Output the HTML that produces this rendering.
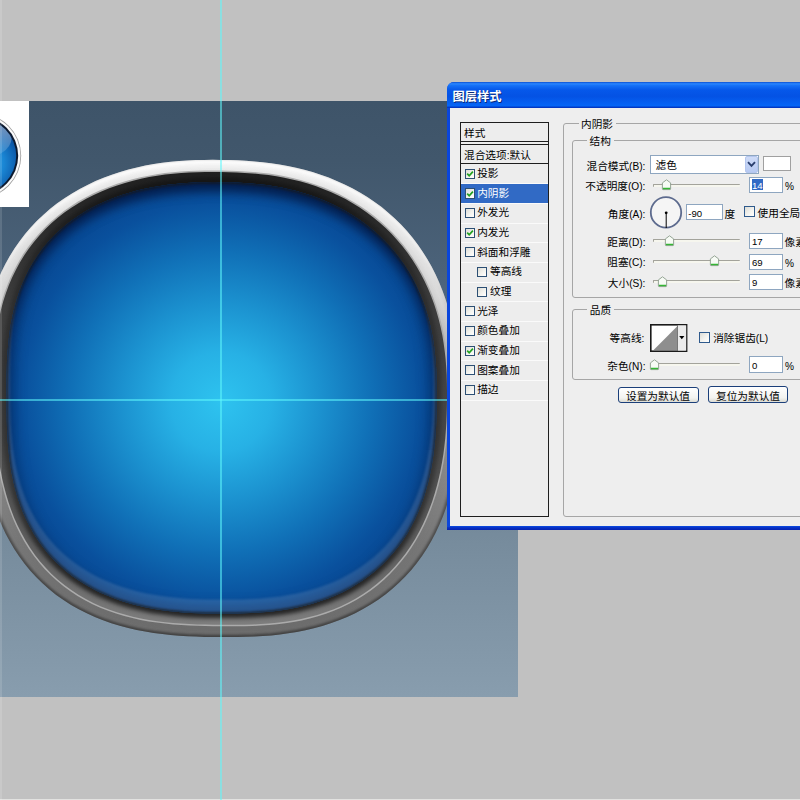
<!DOCTYPE html>
<html lang="zh"><head><meta charset="utf-8"><title>图层样式</title>
<style>
html,body{margin:0;padding:0}
html{overflow:hidden;width:800px;height:800px}
body{width:800px;height:800px;overflow:hidden;position:relative;background:#c1c1c1;font-family:"Liberation Sans","Noto Sans CJK SC",sans-serif;font-size:9.8px;color:#000}
.abs{position:absolute}
div{box-sizing:border-box}
.t{position:absolute;white-space:nowrap;height:14px;line-height:14px;color:#000;overflow:visible;font-family:"Liberation Sans","Noto Sans CJK SC",sans-serif;font-size:10.67px}
.t .l{font-size:10.15px}
.b{position:absolute}
.inp{position:absolute;background:#fff;border:1px solid #8ea6c0}
.cb{position:absolute;width:11.2px;height:11.2px;border:1px solid #2f5a8c;background:linear-gradient(135deg,#dcdcd6 0%,#f3f3ef 55%,#ffffff 100%)}
.cb.s{width:10.3px;height:10.1px;border-color:#2c4f74}
.sep{position:absolute;left:460.5px;width:87px;height:1px;background:#fafafa}
.trk{position:absolute;height:3px;background:#f6f6ee;border-top:1px solid #a3a39b;border-left:1px solid #a3a39b;border-radius:1px}
.grp{position:absolute;border:1px solid #a6a6a6;border-radius:3px}
.btn{position:absolute;border:1px solid #1b3f7a;border-radius:3px;background:linear-gradient(#ffffff,#f3f3f0 70%,#dcdcd4)}
</style></head><body>
<div class="b" style="left:0;top:101px;width:518px;height:596px;background:linear-gradient(#3e5469 0,#41576c 10%,#4b6279 28.4%,#5c7388 50%,#768b9c 72.8%,#889dae 100%)"></div>
<div class="b" style="left:0;top:101px;width:29px;height:106px;background:#fff;overflow:hidden">
<svg class="abs" style="left:0;top:0" width="29" height="106" viewBox="0 101 29 106">
<defs><radialGradient id="tb" cx="-14" cy="163" r="40" gradientUnits="userSpaceOnUse"><stop offset="0" stop-color="#2fb0f0"/><stop offset="0.45" stop-color="#1a86d4"/><stop offset="0.8" stop-color="#0c5aaa"/><stop offset="1" stop-color="#08428c"/></radialGradient>
<linearGradient id="tgl" x1="0" y1="120" x2="0" y2="158" gradientUnits="userSpaceOnUse"><stop offset="0" stop-color="#fff" stop-opacity="0.5"/><stop offset="1" stop-color="#fff" stop-opacity="0.08"/></linearGradient>
<clipPath id="tbc"><circle cx="-21.4" cy="155.8" r="37.6"/></clipPath></defs>
<circle cx="-21.4" cy="155.8" r="42.6" fill="#9a9a9a"/>
<circle cx="-21.4" cy="155.8" r="41.8" fill="#fbfbfb"/>
<circle cx="-21.4" cy="155.8" r="39.6" fill="#0c1a30"/>
<circle cx="-21.4" cy="155.8" r="37.6" fill="url(#tb)"/>
<g clip-path="url(#tbc)"><ellipse cx="-21.4" cy="138" rx="33" ry="21" fill="url(#tgl)"/></g>
</svg></div>
<svg class="abs" style="left:0;top:0" width="800" height="800" viewBox="0 0 800 800">
<defs>
<linearGradient id="rimg" x1="0" y1="160" x2="0" y2="637" gradientUnits="userSpaceOnUse">
<stop offset="0" stop-color="#f5f5f5"/><stop offset="0.12" stop-color="#ececec"/><stop offset="0.29" stop-color="#d9d9d9"/><stop offset="0.42" stop-color="#b6b6b6"/><stop offset="0.6" stop-color="#8e8e8e"/><stop offset="0.8" stop-color="#777777"/><stop offset="1" stop-color="#6c6c6c"/>
</linearGradient>
<linearGradient id="ringg" x1="0" y1="171" x2="0" y2="626" gradientUnits="userSpaceOnUse">
<stop offset="0" stop-color="#202020"/><stop offset="0.12" stop-color="#2c2c2c"/><stop offset="0.3" stop-color="#3e3e3e"/><stop offset="0.6" stop-color="#484848"/><stop offset="0.85" stop-color="#626262"/><stop offset="1" stop-color="#7e7e7e"/>
</linearGradient>
<linearGradient id="rimhi" x1="0" y1="160" x2="0" y2="637" gradientUnits="userSpaceOnUse">
<stop offset="0" stop-color="#fff" stop-opacity="0.95"/><stop offset="0.2" stop-color="#fff" stop-opacity="0.7"/><stop offset="0.38" stop-color="#fff" stop-opacity="0"/><stop offset="1" stop-color="#fff" stop-opacity="0"/>
</linearGradient>
<linearGradient id="rimlo" x1="0" y1="160" x2="0" y2="637" gradientUnits="userSpaceOnUse">
<stop offset="0" stop-color="#303030" stop-opacity="0.15"/><stop offset="0.4" stop-color="#303030" stop-opacity="0.2"/><stop offset="0.65" stop-color="#303030" stop-opacity="0.55"/><stop offset="1" stop-color="#303030" stop-opacity="0.7"/>
</linearGradient>
<linearGradient id="ringsh" x1="0" y1="171" x2="0" y2="626" gradientUnits="userSpaceOnUse">
<stop offset="0" stop-color="#0a0a0a" stop-opacity="0.55"/><stop offset="0.2" stop-color="#0a0a0a" stop-opacity="0.3"/><stop offset="0.65" stop-color="#0a0a0a" stop-opacity="0.35"/><stop offset="0.9" stop-color="#0a0a0a" stop-opacity="0.72"/><stop offset="1" stop-color="#0a0a0a" stop-opacity="0.78"/>
</linearGradient>
<radialGradient id="blueg" cx="221" cy="402" r="250" gradientUnits="userSpaceOnUse">
<stop offset="0" stop-color="#2ec3ef"/><stop offset="0.2" stop-color="#27b1e5"/><stop offset="0.4" stop-color="#1b91cf"/><stop offset="0.6" stop-color="#1070b7"/><stop offset="0.8" stop-color="#09509d"/><stop offset="1" stop-color="#063f88"/>
</radialGradient>
<linearGradient id="topsh" x1="0" y1="182" x2="0" y2="218" gradientUnits="userSpaceOnUse">
<stop offset="0" stop-color="#02122e" stop-opacity="0.95"/><stop offset="0.18" stop-color="#031a44" stop-opacity="0.7"/><stop offset="0.42" stop-color="#04245a" stop-opacity="0.32"/><stop offset="1" stop-color="#04245a" stop-opacity="0"/>
</linearGradient>
<clipPath id="bluec"><path d="M436.8 398.5L436.7 406.0L436.6 413.6L436.3 421.1L436.0 428.7L435.4 436.3L434.8 443.9L433.9 451.6L432.8 459.2L431.5 466.9L430.0 474.6L428.2 482.2L426.1 489.8L423.8 497.4L421.1 504.9L418.1 512.3L414.8 519.6L411.1 526.7L407.1 533.7L402.7 540.5L398.0 547.0L392.9 553.3L387.5 559.3L381.8 565.1L375.8 570.5L369.5 575.5L363.0 580.3L356.2 584.6L349.3 588.7L342.1 592.4L334.8 595.7L327.4 598.7L319.9 601.3L312.4 603.7L304.7 605.7L297.1 607.5L289.4 609.0L281.7 610.2L274.0 611.2L266.4 612.0L258.8 612.6L251.2 613.1L243.6 613.3L236.0 613.5L228.5 613.6L221.0 613.6L213.5 613.5L206.0 613.4L198.4 613.2L190.9 612.9L183.3 612.4L175.7 611.7L168.0 610.9L160.4 609.9L152.7 608.7L145.0 607.2L137.4 605.5L129.7 603.5L122.2 601.2L114.6 598.6L107.2 595.6L99.8 592.4L92.6 588.8L85.6 584.8L78.8 580.6L72.1 575.9L65.8 570.9L59.7 565.6L53.9 559.9L48.4 553.9L43.3 547.6L38.5 541.1L34.1 534.3L30.1 527.3L26.4 520.1L23.1 512.7L20.2 505.3L17.6 497.7L15.4 490.0L13.5 482.3L11.9 474.6L10.5 466.9L9.4 459.2L8.6 451.5L7.9 443.8L7.4 436.2L7.0 428.6L6.8 421.0L6.7 413.5L6.6 406.0L6.6 398.5L6.5 391.0L6.5 383.5L6.6 376.0L6.8 368.4L7.0 360.8L7.5 353.1L8.1 345.4L8.9 337.7L9.9 329.9L11.2 322.1L12.8 314.4L14.7 306.6L16.9 298.9L19.4 291.3L22.4 283.8L25.7 276.4L29.3 269.2L33.4 262.2L37.8 255.4L42.6 248.8L47.8 242.6L53.3 236.6L59.1 230.9L65.3 225.5L71.7 220.5L78.3 215.9L85.2 211.6L92.2 207.6L99.4 204.0L106.8 200.7L114.2 197.7L121.8 195.0L129.4 192.7L137.0 190.6L144.7 188.7L152.3 187.2L160.0 185.9L167.7 184.8L175.4 183.9L183.0 183.2L190.7 182.7L198.3 182.3L205.9 182.2L213.4 182.1L221.0 182.2L228.6 182.3L236.1 182.5L243.7 182.9L251.2 183.4L258.8 184.2L266.4 185.1L273.9 186.3L281.5 187.6L289.0 189.2L296.5 191.1L303.9 193.2L311.3 195.6L318.6 198.3L325.9 201.3L333.0 204.5L340.0 208.0L346.9 211.8L353.7 215.9L360.2 220.3L366.6 225.0L372.8 229.9L378.7 235.2L384.4 240.7L389.9 246.4L395.0 252.5L399.9 258.7L404.5 265.2L408.8 271.9L412.7 278.7L416.3 285.7L419.6 292.9L422.6 300.2L425.2 307.6L427.5 315.1L429.6 322.6L431.3 330.2L432.8 337.8L434.0 345.4L434.9 353.0L435.6 360.7L436.2 368.3L436.5 375.8L436.7 383.4L436.8 391.0Z"/></clipPath>
<clipPath id="ringc"><path d="M447.0 398.5L446.9 406.4L446.7 414.3L446.4 422.2L445.9 430.1L445.3 438.0L444.4 446.0L443.4 453.9L442.1 461.9L440.6 469.9L438.9 477.8L436.9 485.7L434.7 493.6L432.2 501.5L429.3 509.3L426.2 517.0L422.8 524.6L419.0 532.0L414.9 539.4L410.4 546.5L405.6 553.4L400.5 560.1L395.0 566.6L389.2 572.7L383.1 578.6L376.7 584.1L370.0 589.2L363.1 594.0L355.9 598.4L348.5 602.5L340.9 606.2L333.2 609.4L325.3 612.3L317.3 614.9L309.3 617.1L301.2 619.0L293.1 620.5L285.0 621.8L276.9 622.8L268.8 623.6L260.8 624.1L252.8 624.5L244.8 624.7L236.8 624.8L228.9 624.8L221.0 624.8L213.1 624.7L205.2 624.6L197.3 624.4L189.3 624.0L181.3 623.6L173.3 623.0L165.2 622.2L157.1 621.2L149.0 620.0L140.9 618.5L132.8 616.7L124.8 614.6L116.8 612.2L108.8 609.5L101.0 606.4L93.3 602.9L85.8 599.0L78.4 594.8L71.3 590.1L64.4 585.1L57.9 579.7L51.6 573.9L45.7 567.8L40.1 561.4L34.8 554.7L30.0 547.7L25.5 540.5L21.4 533.1L17.6 525.6L14.2 517.9L11.2 510.1L8.5 502.2L6.1 494.2L4.0 486.2L2.1 478.2L0.5 470.1L-0.8 462.1L-2.0 454.1L-2.9 446.1L-3.7 438.1L-4.3 430.2L-4.9 422.2L-5.3 414.3L-5.6 406.4L-5.8 398.5L-6.0 390.6L-6.2 382.6L-6.2 374.6L-6.1 366.6L-5.8 358.5L-5.3 350.4L-4.6 342.3L-3.6 334.1L-2.4 325.9L-0.8 317.8L1.0 309.6L3.2 301.5L5.8 293.5L8.7 285.6L12.0 277.8L15.7 270.2L19.7 262.7L24.1 255.5L28.9 248.4L34.1 241.7L39.6 235.2L45.4 229.0L51.6 223.1L58.0 217.5L64.7 212.3L71.7 207.4L78.9 202.9L86.2 198.7L93.7 194.9L101.4 191.4L109.2 188.2L117.1 185.4L125.0 182.9L133.0 180.7L141.0 178.8L149.1 177.1L157.1 175.7L165.2 174.6L173.2 173.7L181.2 173.0L189.2 172.5L197.2 172.2L205.2 172.0L213.1 172.0L221.0 172.1L228.9 172.2L236.8 172.5L244.7 172.9L252.6 173.4L260.6 174.2L268.5 175.1L276.4 176.3L284.3 177.7L292.2 179.4L300.0 181.3L307.8 183.6L315.6 186.1L323.2 188.9L330.8 192.0L338.3 195.4L345.6 199.1L352.7 203.2L359.7 207.6L366.5 212.2L373.1 217.2L379.5 222.4L385.7 228.0L391.5 233.8L397.1 239.9L402.5 246.2L407.5 252.8L412.2 259.6L416.6 266.5L420.7 273.7L424.5 281.0L428.0 288.4L431.1 296.0L434.0 303.7L436.5 311.4L438.7 319.3L440.6 327.1L442.3 335.1L443.6 343.0L444.7 350.9L445.6 358.9L446.2 366.8L446.7 374.8L446.9 382.7L447.0 390.6Z"/></clipPath>
<clipPath id="rimc"><path d="M459.5 398.5L459.6 406.8L459.6 415.2L459.5 423.6L459.2 432.0L458.7 440.4L458.0 448.9L457.1 457.4L456.0 465.9L454.6 474.4L452.9 482.9L450.9 491.4L448.6 499.8L445.9 508.2L442.9 516.5L439.5 524.6L435.7 532.7L431.6 540.6L427.1 548.2L422.2 555.7L416.9 562.9L411.3 569.9L405.3 576.5L399.0 582.8L392.4 588.8L385.4 594.4L378.2 599.7L370.7 604.6L363.0 609.1L355.2 613.2L347.1 616.9L338.9 620.3L330.6 623.3L322.3 626.0L313.8 628.3L305.4 630.3L296.8 631.9L288.3 633.3L279.8 634.5L271.3 635.4L262.9 636.0L254.5 636.5L246.0 636.8L237.7 637.0L229.3 637.1L221.0 637.0L212.7 637.0L204.3 636.9L196.0 636.6L187.6 636.3L179.2 635.7L170.7 635.0L162.3 634.1L153.8 633.0L145.3 631.6L136.8 630.0L128.3 628.0L119.8 625.8L111.4 623.2L103.1 620.3L94.9 617.0L86.8 613.3L78.8 609.3L71.1 604.9L63.5 600.0L56.2 594.9L49.2 589.3L42.5 583.3L36.1 577.0L30.1 570.4L24.4 563.5L19.1 556.3L14.1 548.8L9.6 541.1L5.4 533.2L1.6 525.1L-1.8 516.9L-4.8 508.6L-7.5 500.2L-9.9 491.8L-11.9 483.3L-13.7 474.7L-15.1 466.2L-16.4 457.7L-17.4 449.2L-18.2 440.7L-18.8 432.2L-19.2 423.7L-19.5 415.3L-19.7 406.9L-19.8 398.5L-19.9 390.1L-19.9 381.7L-19.7 373.2L-19.4 364.7L-18.9 356.2L-18.2 347.7L-17.3 339.1L-16.1 330.5L-14.5 322.0L-12.7 313.4L-10.6 304.9L-8.1 296.5L-5.3 288.1L-2.1 279.9L1.5 271.8L5.5 263.8L9.8 256.1L14.5 248.5L19.6 241.2L25.1 234.1L30.9 227.3L37.0 220.8L43.5 214.7L50.2 208.8L57.2 203.3L64.5 198.2L72.0 193.4L79.7 189.0L87.5 184.9L95.5 181.1L103.6 177.7L111.8 174.7L120.1 171.9L128.5 169.5L136.9 167.4L145.3 165.6L153.8 164.1L162.2 162.8L170.7 161.8L179.1 161.0L187.5 160.4L195.9 160.1L204.3 159.9L212.7 159.8L221.0 159.9L229.3 160.1L237.7 160.3L246.0 160.8L254.3 161.4L262.7 162.2L271.0 163.2L279.4 164.5L287.7 166.0L296.0 167.7L304.3 169.8L312.5 172.1L320.6 174.7L328.7 177.6L336.7 180.9L344.6 184.4L352.3 188.3L359.9 192.5L367.3 197.1L374.6 201.9L381.6 207.1L388.3 212.7L394.8 218.5L401.0 224.6L407.0 231.1L412.6 237.7L417.9 244.7L422.8 251.9L427.4 259.3L431.7 266.8L435.6 274.6L439.2 282.5L442.4 290.5L445.3 298.6L447.9 306.8L450.2 315.1L452.2 323.4L453.8 331.7L455.3 340.1L456.4 348.5L457.4 356.8L458.1 365.2L458.7 373.5L459.0 381.9L459.3 390.2Z"/></clipPath>
<mask id="topm" maskUnits="userSpaceOnUse" x="0" y="150" width="470" height="500"><rect x="0" y="150" width="470" height="500" fill="#fff"/><path d="M438.8 408.5L438.7 416.1L438.6 423.7L438.3 431.3L437.9 439.0L437.4 446.7L436.7 454.4L435.8 462.1L434.7 469.8L433.4 477.5L431.9 485.3L430.1 493.0L428.0 500.7L425.6 508.3L422.9 515.8L419.9 523.3L416.5 530.7L412.8 537.9L408.7 544.9L404.3 551.7L399.5 558.3L394.4 564.7L389.0 570.7L383.2 576.5L377.2 581.9L370.8 587.1L364.2 591.8L357.4 596.3L350.4 600.3L343.2 604.0L335.8 607.4L328.4 610.4L320.8 613.1L313.2 615.5L305.5 617.6L297.7 619.4L290.0 620.9L282.3 622.1L274.5 623.2L266.8 624.0L259.1 624.6L251.4 625.0L243.8 625.3L236.2 625.5L228.6 625.6L221.0 625.6L213.4 625.5L205.8 625.4L198.2 625.2L190.6 624.8L182.9 624.4L175.3 623.7L167.6 622.9L159.8 621.8L152.1 620.6L144.4 619.1L136.6 617.3L128.9 615.3L121.3 613.0L113.7 610.3L106.2 607.4L98.8 604.1L91.5 600.5L84.4 596.5L77.5 592.1L70.9 587.4L64.4 582.4L58.3 577.0L52.4 571.3L46.9 565.2L41.7 558.9L36.9 552.3L32.5 545.5L28.4 538.4L24.7 531.2L21.4 523.7L18.4 516.2L15.8 508.6L13.6 500.9L11.6 493.1L10.0 485.3L8.6 477.5L7.5 469.7L6.6 462.0L5.9 454.2L5.4 446.5L5.1 438.8L4.8 431.2L4.7 423.6L4.6 416.1L4.6 408.5L4.5 400.9L4.5 393.4L4.6 385.8L4.8 378.1L5.1 370.4L5.5 362.7L6.1 354.9L6.9 347.1L8.0 339.3L9.3 331.5L10.9 323.6L12.8 315.8L15.1 308.1L17.7 300.4L20.6 292.8L24.0 285.4L27.7 278.1L31.8 271.0L36.3 264.2L41.1 257.6L46.3 251.2L51.9 245.2L57.8 239.5L63.9 234.1L70.4 229.0L77.1 224.3L84.0 219.9L91.1 215.9L98.4 212.3L105.8 208.9L113.3 205.9L120.9 203.2L128.5 200.8L136.2 198.7L144.0 196.9L151.7 195.3L159.5 193.9L167.2 192.8L175.0 191.9L182.7 191.2L190.4 190.7L198.1 190.4L205.7 190.2L213.4 190.1L221.0 190.2L228.6 190.3L236.2 190.5L243.9 190.9L251.5 191.5L259.1 192.2L266.8 193.2L274.4 194.3L282.0 195.7L289.6 197.3L297.2 199.2L304.7 201.4L312.1 203.8L319.5 206.5L326.8 209.5L334.0 212.8L341.1 216.3L348.0 220.2L354.8 224.3L361.5 228.7L367.9 233.4L374.1 238.4L380.1 243.7L385.9 249.3L391.4 255.1L396.6 261.2L401.5 267.5L406.1 274.0L410.4 280.7L414.4 287.7L418.0 294.7L421.4 302.0L424.4 309.3L427.0 316.8L429.4 324.3L431.4 331.9L433.2 339.6L434.7 347.2L435.9 354.9L436.9 362.6L437.6 370.3L438.1 378.0L438.5 385.6L438.7 393.3L438.8 400.9Z" fill="#000" filter="url(#bl7)"/></mask>
<mask id="cres" maskUnits="userSpaceOnUse" x="0" y="150" width="470" height="500"><rect x="0" y="150" width="470" height="500" fill="#fff"/><path d="M433.3 388.0L433.2 395.4L433.1 402.8L432.8 410.3L432.5 417.7L432.0 425.2L431.3 432.7L430.5 440.2L429.5 447.8L428.2 455.3L426.7 462.9L425.0 470.4L423.0 477.9L420.6 485.4L418.0 492.8L415.1 500.1L411.8 507.2L408.2 514.3L404.3 521.1L400.0 527.8L395.3 534.3L390.3 540.5L385.0 546.4L379.4 552.0L373.5 557.4L367.3 562.3L360.9 567.0L354.2 571.3L347.3 575.3L340.3 578.9L333.1 582.2L325.8 585.1L318.4 587.7L310.9 590.0L303.4 592.0L295.9 593.7L288.3 595.1L280.7 596.4L273.2 597.3L265.7 598.1L258.1 598.7L250.7 599.1L243.2 599.4L235.8 599.5L228.4 599.6L221.0 599.6L213.6 599.5L206.2 599.4L198.8 599.2L191.4 598.9L183.9 598.4L176.4 597.8L168.9 597.0L161.3 596.1L153.8 594.8L146.2 593.4L138.7 591.7L131.2 589.8L123.7 587.5L116.3 585.0L108.9 582.1L101.7 578.9L94.6 575.4L87.7 571.5L80.9 567.3L74.4 562.7L68.1 557.8L62.1 552.5L56.4 547.0L51.0 541.1L46.0 534.9L41.3 528.4L36.9 521.7L33.0 514.8L29.4 507.7L26.1 500.5L23.3 493.1L20.8 485.7L18.6 478.1L16.7 470.5L15.1 462.9L13.8 455.3L12.8 447.7L12.0 440.1L11.3 432.6L10.8 425.1L10.5 417.6L10.3 410.1L10.2 402.7L10.1 395.4L10.1 388.0L10.0 380.6L10.0 373.2L10.1 365.8L10.2 358.4L10.5 350.9L10.9 343.3L11.5 335.8L12.2 328.1L13.2 320.5L14.5 312.8L16.0 305.2L17.9 297.6L20.0 290.0L22.5 282.5L25.4 275.1L28.6 267.8L32.2 260.7L36.2 253.8L40.6 247.0L45.3 240.6L50.4 234.4L55.8 228.5L61.6 222.9L67.6 217.6L73.9 212.7L80.5 208.1L87.2 203.9L94.2 200.0L101.3 196.4L108.5 193.2L115.9 190.3L123.3 187.7L130.8 185.4L138.3 183.3L145.9 181.5L153.4 180.0L161.0 178.7L168.6 177.7L176.1 176.8L183.6 176.1L191.2 175.6L198.6 175.3L206.1 175.2L213.6 175.1L221.0 175.2L228.4 175.3L235.9 175.5L243.3 175.9L250.7 176.4L258.2 177.1L265.6 178.0L273.1 179.2L280.5 180.5L287.9 182.1L295.3 183.9L302.6 186.0L309.9 188.3L317.1 191.0L324.2 193.8L331.3 197.0L338.2 200.5L345.0 204.2L351.6 208.2L358.1 212.6L364.4 217.1L370.4 222.0L376.3 227.2L381.9 232.6L387.3 238.3L392.4 244.2L397.2 250.4L401.7 256.7L405.8 263.3L409.7 270.1L413.3 277.0L416.5 284.0L419.4 291.2L422.0 298.5L424.3 305.9L426.3 313.3L428.0 320.8L429.4 328.2L430.6 335.8L431.5 343.3L432.2 350.8L432.7 358.2L433.0 365.7L433.2 373.2L433.3 380.6Z" fill="#000" filter="url(#bl1)"/></mask>
<filter id="bl6" color-interpolation-filters="sRGB" x="-10%" y="-10%" width="120%" height="120%"><feGaussianBlur stdDeviation="6"/></filter>
<filter id="bl7" color-interpolation-filters="sRGB" x="-10%" y="-10%" width="120%" height="120%"><feGaussianBlur stdDeviation="6"/></filter>
<filter id="bl2" color-interpolation-filters="sRGB" x="-10%" y="-10%" width="120%" height="120%"><feGaussianBlur stdDeviation="2.2"/></filter>
<filter id="bl1" color-interpolation-filters="sRGB" x="-10%" y="-10%" width="120%" height="120%"><feGaussianBlur stdDeviation="1.1"/></filter>
</defs>
<path d="M459.5 398.5L459.6 406.8L459.6 415.2L459.5 423.6L459.2 432.0L458.7 440.4L458.0 448.9L457.1 457.4L456.0 465.9L454.6 474.4L452.9 482.9L450.9 491.4L448.6 499.8L445.9 508.2L442.9 516.5L439.5 524.6L435.7 532.7L431.6 540.6L427.1 548.2L422.2 555.7L416.9 562.9L411.3 569.9L405.3 576.5L399.0 582.8L392.4 588.8L385.4 594.4L378.2 599.7L370.7 604.6L363.0 609.1L355.2 613.2L347.1 616.9L338.9 620.3L330.6 623.3L322.3 626.0L313.8 628.3L305.4 630.3L296.8 631.9L288.3 633.3L279.8 634.5L271.3 635.4L262.9 636.0L254.5 636.5L246.0 636.8L237.7 637.0L229.3 637.1L221.0 637.0L212.7 637.0L204.3 636.9L196.0 636.6L187.6 636.3L179.2 635.7L170.7 635.0L162.3 634.1L153.8 633.0L145.3 631.6L136.8 630.0L128.3 628.0L119.8 625.8L111.4 623.2L103.1 620.3L94.9 617.0L86.8 613.3L78.8 609.3L71.1 604.9L63.5 600.0L56.2 594.9L49.2 589.3L42.5 583.3L36.1 577.0L30.1 570.4L24.4 563.5L19.1 556.3L14.1 548.8L9.6 541.1L5.4 533.2L1.6 525.1L-1.8 516.9L-4.8 508.6L-7.5 500.2L-9.9 491.8L-11.9 483.3L-13.7 474.7L-15.1 466.2L-16.4 457.7L-17.4 449.2L-18.2 440.7L-18.8 432.2L-19.2 423.7L-19.5 415.3L-19.7 406.9L-19.8 398.5L-19.9 390.1L-19.9 381.7L-19.7 373.2L-19.4 364.7L-18.9 356.2L-18.2 347.7L-17.3 339.1L-16.1 330.5L-14.5 322.0L-12.7 313.4L-10.6 304.9L-8.1 296.5L-5.3 288.1L-2.1 279.9L1.5 271.8L5.5 263.8L9.8 256.1L14.5 248.5L19.6 241.2L25.1 234.1L30.9 227.3L37.0 220.8L43.5 214.7L50.2 208.8L57.2 203.3L64.5 198.2L72.0 193.4L79.7 189.0L87.5 184.9L95.5 181.1L103.6 177.7L111.8 174.7L120.1 171.9L128.5 169.5L136.9 167.4L145.3 165.6L153.8 164.1L162.2 162.8L170.7 161.8L179.1 161.0L187.5 160.4L195.9 160.1L204.3 159.9L212.7 159.8L221.0 159.9L229.3 160.1L237.7 160.3L246.0 160.8L254.3 161.4L262.7 162.2L271.0 163.2L279.4 164.5L287.7 166.0L296.0 167.7L304.3 169.8L312.5 172.1L320.6 174.7L328.7 177.6L336.7 180.9L344.6 184.4L352.3 188.3L359.9 192.5L367.3 197.1L374.6 201.9L381.6 207.1L388.3 212.7L394.8 218.5L401.0 224.6L407.0 231.1L412.6 237.7L417.9 244.7L422.8 251.9L427.4 259.3L431.7 266.8L435.6 274.6L439.2 282.5L442.4 290.5L445.3 298.6L447.9 306.8L450.2 315.1L452.2 323.4L453.8 331.7L455.3 340.1L456.4 348.5L457.4 356.8L458.1 365.2L458.7 373.5L459.0 381.9L459.3 390.2Z" fill="url(#rimg)"/>
<g clip-path="url(#rimc)">
<path d="M459.5 398.5L459.6 406.8L459.6 415.2L459.5 423.6L459.2 432.0L458.7 440.4L458.0 448.9L457.1 457.4L456.0 465.9L454.6 474.4L452.9 482.9L450.9 491.4L448.6 499.8L445.9 508.2L442.9 516.5L439.5 524.6L435.7 532.7L431.6 540.6L427.1 548.2L422.2 555.7L416.9 562.9L411.3 569.9L405.3 576.5L399.0 582.8L392.4 588.8L385.4 594.4L378.2 599.7L370.7 604.6L363.0 609.1L355.2 613.2L347.1 616.9L338.9 620.3L330.6 623.3L322.3 626.0L313.8 628.3L305.4 630.3L296.8 631.9L288.3 633.3L279.8 634.5L271.3 635.4L262.9 636.0L254.5 636.5L246.0 636.8L237.7 637.0L229.3 637.1L221.0 637.0L212.7 637.0L204.3 636.9L196.0 636.6L187.6 636.3L179.2 635.7L170.7 635.0L162.3 634.1L153.8 633.0L145.3 631.6L136.8 630.0L128.3 628.0L119.8 625.8L111.4 623.2L103.1 620.3L94.9 617.0L86.8 613.3L78.8 609.3L71.1 604.9L63.5 600.0L56.2 594.9L49.2 589.3L42.5 583.3L36.1 577.0L30.1 570.4L24.4 563.5L19.1 556.3L14.1 548.8L9.6 541.1L5.4 533.2L1.6 525.1L-1.8 516.9L-4.8 508.6L-7.5 500.2L-9.9 491.8L-11.9 483.3L-13.7 474.7L-15.1 466.2L-16.4 457.7L-17.4 449.2L-18.2 440.7L-18.8 432.2L-19.2 423.7L-19.5 415.3L-19.7 406.9L-19.8 398.5L-19.9 390.1L-19.9 381.7L-19.7 373.2L-19.4 364.7L-18.9 356.2L-18.2 347.7L-17.3 339.1L-16.1 330.5L-14.5 322.0L-12.7 313.4L-10.6 304.9L-8.1 296.5L-5.3 288.1L-2.1 279.9L1.5 271.8L5.5 263.8L9.8 256.1L14.5 248.5L19.6 241.2L25.1 234.1L30.9 227.3L37.0 220.8L43.5 214.7L50.2 208.8L57.2 203.3L64.5 198.2L72.0 193.4L79.7 189.0L87.5 184.9L95.5 181.1L103.6 177.7L111.8 174.7L120.1 171.9L128.5 169.5L136.9 167.4L145.3 165.6L153.8 164.1L162.2 162.8L170.7 161.8L179.1 161.0L187.5 160.4L195.9 160.1L204.3 159.9L212.7 159.8L221.0 159.9L229.3 160.1L237.7 160.3L246.0 160.8L254.3 161.4L262.7 162.2L271.0 163.2L279.4 164.5L287.7 166.0L296.0 167.7L304.3 169.8L312.5 172.1L320.6 174.7L328.7 177.6L336.7 180.9L344.6 184.4L352.3 188.3L359.9 192.5L367.3 197.1L374.6 201.9L381.6 207.1L388.3 212.7L394.8 218.5L401.0 224.6L407.0 231.1L412.6 237.7L417.9 244.7L422.8 251.9L427.4 259.3L431.7 266.8L435.6 274.6L439.2 282.5L442.4 290.5L445.3 298.6L447.9 306.8L450.2 315.1L452.2 323.4L453.8 331.7L455.3 340.1L456.4 348.5L457.4 356.8L458.1 365.2L458.7 373.5L459.0 381.9L459.3 390.2Z" fill="none" stroke="url(#rimlo)" stroke-width="4.5" filter="url(#bl1)"/>
<path d="M459.5 400.7L459.6 409.0L459.6 417.4L459.5 425.8L459.2 434.2L458.7 442.6L458.0 451.1L457.1 459.6L456.0 468.1L454.6 476.6L452.9 485.1L450.9 493.6L448.6 502.0L445.9 510.4L442.9 518.7L439.5 526.8L435.7 534.9L431.6 542.8L427.1 550.4L422.2 557.9L416.9 565.1L411.3 572.1L405.3 578.7L399.0 585.0L392.4 591.0L385.4 596.6L378.2 601.9L370.7 606.8L363.0 611.3L355.2 615.4L347.1 619.1L338.9 622.5L330.6 625.5L322.3 628.2L313.8 630.5L305.4 632.5L296.8 634.1L288.3 635.5L279.8 636.7L271.3 637.6L262.9 638.2L254.5 638.7L246.0 639.0L237.7 639.2L229.3 639.3L221.0 639.2L212.7 639.2L204.3 639.1L196.0 638.8L187.6 638.5L179.2 637.9L170.7 637.2L162.3 636.3L153.8 635.2L145.3 633.8L136.8 632.2L128.3 630.2L119.8 628.0L111.4 625.4L103.1 622.5L94.9 619.2L86.8 615.5L78.8 611.5L71.1 607.1L63.5 602.2L56.2 597.1L49.2 591.5L42.5 585.5L36.1 579.2L30.1 572.6L24.4 565.7L19.1 558.5L14.1 551.0L9.6 543.3L5.4 535.4L1.6 527.3L-1.8 519.1L-4.8 510.8L-7.5 502.4L-9.9 494.0L-11.9 485.5L-13.7 476.9L-15.1 468.4L-16.4 459.9L-17.4 451.4L-18.2 442.9L-18.8 434.4L-19.2 425.9L-19.5 417.5L-19.7 409.1L-19.8 400.7L-19.9 392.3L-19.9 383.9L-19.7 375.4L-19.4 366.9L-18.9 358.4L-18.2 349.9L-17.3 341.3L-16.1 332.7L-14.5 324.2L-12.7 315.6L-10.6 307.1L-8.1 298.7L-5.3 290.3L-2.1 282.1L1.5 274.0L5.5 266.0L9.8 258.3L14.5 250.7L19.6 243.4L25.1 236.3L30.9 229.5L37.0 223.0L43.5 216.9L50.2 211.0L57.2 205.5L64.5 200.4L72.0 195.6L79.7 191.2L87.5 187.1L95.5 183.3L103.6 179.9L111.8 176.9L120.1 174.1L128.5 171.7L136.9 169.6L145.3 167.8L153.8 166.3L162.2 165.0L170.7 164.0L179.1 163.2L187.5 162.6L195.9 162.3L204.3 162.1L212.7 162.0L221.0 162.1L229.3 162.3L237.7 162.5L246.0 163.0L254.3 163.6L262.7 164.4L271.0 165.4L279.4 166.7L287.7 168.2L296.0 169.9L304.3 172.0L312.5 174.3L320.6 176.9L328.7 179.8L336.7 183.1L344.6 186.6L352.3 190.5L359.9 194.7L367.3 199.3L374.6 204.1L381.6 209.3L388.3 214.9L394.8 220.7L401.0 226.8L407.0 233.3L412.6 239.9L417.9 246.9L422.8 254.1L427.4 261.5L431.7 269.0L435.6 276.8L439.2 284.7L442.4 292.7L445.3 300.8L447.9 309.0L450.2 317.3L452.2 325.6L453.8 333.9L455.3 342.3L456.4 350.7L457.4 359.0L458.1 367.4L458.7 375.7L459.0 384.1L459.3 392.4Z" fill="none" stroke="url(#rimhi)" stroke-width="3.5" filter="url(#bl1)"/>
<path d="M447.0 398.5L446.9 406.4L446.7 414.3L446.4 422.2L445.9 430.1L445.3 438.0L444.4 446.0L443.4 453.9L442.1 461.9L440.6 469.9L438.9 477.8L436.9 485.7L434.7 493.6L432.2 501.5L429.3 509.3L426.2 517.0L422.8 524.6L419.0 532.0L414.9 539.4L410.4 546.5L405.6 553.4L400.5 560.1L395.0 566.6L389.2 572.7L383.1 578.6L376.7 584.1L370.0 589.2L363.1 594.0L355.9 598.4L348.5 602.5L340.9 606.2L333.2 609.4L325.3 612.3L317.3 614.9L309.3 617.1L301.2 619.0L293.1 620.5L285.0 621.8L276.9 622.8L268.8 623.6L260.8 624.1L252.8 624.5L244.8 624.7L236.8 624.8L228.9 624.8L221.0 624.8L213.1 624.7L205.2 624.6L197.3 624.4L189.3 624.0L181.3 623.6L173.3 623.0L165.2 622.2L157.1 621.2L149.0 620.0L140.9 618.5L132.8 616.7L124.8 614.6L116.8 612.2L108.8 609.5L101.0 606.4L93.3 602.9L85.8 599.0L78.4 594.8L71.3 590.1L64.4 585.1L57.9 579.7L51.6 573.9L45.7 567.8L40.1 561.4L34.8 554.7L30.0 547.7L25.5 540.5L21.4 533.1L17.6 525.6L14.2 517.9L11.2 510.1L8.5 502.2L6.1 494.2L4.0 486.2L2.1 478.2L0.5 470.1L-0.8 462.1L-2.0 454.1L-2.9 446.1L-3.7 438.1L-4.3 430.2L-4.9 422.2L-5.3 414.3L-5.6 406.4L-5.8 398.5L-6.0 390.6L-6.2 382.6L-6.2 374.6L-6.1 366.6L-5.8 358.5L-5.3 350.4L-4.6 342.3L-3.6 334.1L-2.4 325.9L-0.8 317.8L1.0 309.6L3.2 301.5L5.8 293.5L8.7 285.6L12.0 277.8L15.7 270.2L19.7 262.7L24.1 255.5L28.9 248.4L34.1 241.7L39.6 235.2L45.4 229.0L51.6 223.1L58.0 217.5L64.7 212.3L71.7 207.4L78.9 202.9L86.2 198.7L93.7 194.9L101.4 191.4L109.2 188.2L117.1 185.4L125.0 182.9L133.0 180.7L141.0 178.8L149.1 177.1L157.1 175.7L165.2 174.6L173.2 173.7L181.2 173.0L189.2 172.5L197.2 172.2L205.2 172.0L213.1 172.0L221.0 172.1L228.9 172.2L236.8 172.5L244.7 172.9L252.6 173.4L260.6 174.2L268.5 175.1L276.4 176.3L284.3 177.7L292.2 179.4L300.0 181.3L307.8 183.6L315.6 186.1L323.2 188.9L330.8 192.0L338.3 195.4L345.6 199.1L352.7 203.2L359.7 207.6L366.5 212.2L373.1 217.2L379.5 222.4L385.7 228.0L391.5 233.8L397.1 239.9L402.5 246.2L407.5 252.8L412.2 259.6L416.6 266.5L420.7 273.7L424.5 281.0L428.0 288.4L431.1 296.0L434.0 303.7L436.5 311.4L438.7 319.3L440.6 327.1L442.3 335.1L443.6 343.0L444.7 350.9L445.6 358.9L446.2 366.8L446.7 374.8L446.9 382.7L447.0 390.6Z" fill="none" stroke="#666" stroke-opacity="0.09" stroke-width="8" filter="url(#bl2)"/>
</g>
<path d="M448.5 398.5L448.4 406.4L448.2 414.4L447.9 422.3L447.4 430.3L446.8 438.3L445.9 446.3L444.8 454.3L443.6 462.3L442.1 470.3L440.3 478.3L438.3 486.3L436.1 494.3L433.5 502.1L430.7 510.0L427.5 517.7L424.0 525.4L420.2 532.9L416.1 540.2L411.6 547.4L406.8 554.4L401.6 561.1L396.1 567.6L390.3 573.8L384.1 579.7L377.7 585.2L370.9 590.4L363.9 595.2L356.7 599.7L349.3 603.8L341.6 607.5L333.9 610.8L326.0 613.7L318.0 616.3L309.9 618.5L301.8 620.4L293.6 622.0L285.4 623.2L277.3 624.3L269.2 625.0L261.0 625.6L253.0 626.0L244.9 626.2L236.9 626.3L229.0 626.3L221.0 626.3L213.0 626.2L205.1 626.1L197.1 625.8L189.1 625.5L181.0 625.1L173.0 624.4L164.9 623.6L156.7 622.6L148.6 621.4L140.4 619.9L132.3 618.1L124.2 616.0L116.1 613.6L108.1 610.8L100.2 607.7L92.5 604.2L84.9 600.3L77.5 596.0L70.4 591.3L63.5 586.2L56.9 580.8L50.6 575.0L44.6 568.9L39.0 562.4L33.7 555.7L28.8 548.7L24.3 541.4L20.1 534.0L16.4 526.4L12.9 518.6L9.9 510.8L7.1 502.8L4.7 494.8L2.6 486.8L0.7 478.7L-0.9 470.6L-2.3 462.5L-3.4 454.5L-4.4 446.4L-5.2 438.4L-5.8 430.4L-6.3 422.4L-6.7 414.4L-7.1 406.5L-7.3 398.5L-7.5 390.5L-7.7 382.5L-7.7 374.5L-7.6 366.4L-7.3 358.2L-6.8 350.1L-6.1 341.9L-5.1 333.7L-3.8 325.5L-2.2 317.2L-0.4 309.1L1.9 300.9L4.4 292.9L7.4 284.9L10.7 277.1L14.4 269.4L18.5 261.9L22.9 254.6L27.7 247.5L32.9 240.7L38.5 234.2L44.3 227.9L50.5 222.0L57.0 216.4L63.8 211.1L70.8 206.2L78.0 201.6L85.4 197.4L93.0 193.6L100.7 190.1L108.5 186.9L116.4 184.0L124.4 181.5L132.4 179.3L140.5 177.3L148.6 175.7L156.7 174.3L164.8 173.1L172.9 172.2L181.0 171.5L189.0 171.0L197.1 170.7L205.1 170.5L213.0 170.5L221.0 170.6L229.0 170.7L236.9 171.0L244.9 171.4L252.8 171.9L260.8 172.7L268.8 173.6L276.8 174.8L284.7 176.3L292.7 178.0L300.6 179.9L308.4 182.2L316.2 184.7L323.9 187.5L331.5 190.7L339.0 194.1L346.4 197.9L353.6 202.0L360.6 206.3L367.5 211.0L374.1 216.0L380.5 221.3L386.7 226.9L392.6 232.8L398.3 238.9L403.6 245.3L408.7 251.9L413.4 258.7L417.9 265.7L422.0 272.9L425.8 280.2L429.3 287.7L432.5 295.4L435.3 303.1L437.9 310.9L440.1 318.7L442.1 326.7L443.7 334.6L445.1 342.6L446.2 350.6L447.1 358.6L447.7 366.6L448.2 374.6L448.4 382.6L448.5 390.6Z" fill="#ababab"/>
<path d="M447.0 398.5L446.9 406.4L446.7 414.3L446.4 422.2L445.9 430.1L445.3 438.0L444.4 446.0L443.4 453.9L442.1 461.9L440.6 469.9L438.9 477.8L436.9 485.7L434.7 493.6L432.2 501.5L429.3 509.3L426.2 517.0L422.8 524.6L419.0 532.0L414.9 539.4L410.4 546.5L405.6 553.4L400.5 560.1L395.0 566.6L389.2 572.7L383.1 578.6L376.7 584.1L370.0 589.2L363.1 594.0L355.9 598.4L348.5 602.5L340.9 606.2L333.2 609.4L325.3 612.3L317.3 614.9L309.3 617.1L301.2 619.0L293.1 620.5L285.0 621.8L276.9 622.8L268.8 623.6L260.8 624.1L252.8 624.5L244.8 624.7L236.8 624.8L228.9 624.8L221.0 624.8L213.1 624.7L205.2 624.6L197.3 624.4L189.3 624.0L181.3 623.6L173.3 623.0L165.2 622.2L157.1 621.2L149.0 620.0L140.9 618.5L132.8 616.7L124.8 614.6L116.8 612.2L108.8 609.5L101.0 606.4L93.3 602.9L85.8 599.0L78.4 594.8L71.3 590.1L64.4 585.1L57.9 579.7L51.6 573.9L45.7 567.8L40.1 561.4L34.8 554.7L30.0 547.7L25.5 540.5L21.4 533.1L17.6 525.6L14.2 517.9L11.2 510.1L8.5 502.2L6.1 494.2L4.0 486.2L2.1 478.2L0.5 470.1L-0.8 462.1L-2.0 454.1L-2.9 446.1L-3.7 438.1L-4.3 430.2L-4.9 422.2L-5.3 414.3L-5.6 406.4L-5.8 398.5L-6.0 390.6L-6.2 382.6L-6.2 374.6L-6.1 366.6L-5.8 358.5L-5.3 350.4L-4.6 342.3L-3.6 334.1L-2.4 325.9L-0.8 317.8L1.0 309.6L3.2 301.5L5.8 293.5L8.7 285.6L12.0 277.8L15.7 270.2L19.7 262.7L24.1 255.5L28.9 248.4L34.1 241.7L39.6 235.2L45.4 229.0L51.6 223.1L58.0 217.5L64.7 212.3L71.7 207.4L78.9 202.9L86.2 198.7L93.7 194.9L101.4 191.4L109.2 188.2L117.1 185.4L125.0 182.9L133.0 180.7L141.0 178.8L149.1 177.1L157.1 175.7L165.2 174.6L173.2 173.7L181.2 173.0L189.2 172.5L197.2 172.2L205.2 172.0L213.1 172.0L221.0 172.1L228.9 172.2L236.8 172.5L244.7 172.9L252.6 173.4L260.6 174.2L268.5 175.1L276.4 176.3L284.3 177.7L292.2 179.4L300.0 181.3L307.8 183.6L315.6 186.1L323.2 188.9L330.8 192.0L338.3 195.4L345.6 199.1L352.7 203.2L359.7 207.6L366.5 212.2L373.1 217.2L379.5 222.4L385.7 228.0L391.5 233.8L397.1 239.9L402.5 246.2L407.5 252.8L412.2 259.6L416.6 266.5L420.7 273.7L424.5 281.0L428.0 288.4L431.1 296.0L434.0 303.7L436.5 311.4L438.7 319.3L440.6 327.1L442.3 335.1L443.6 343.0L444.7 350.9L445.6 358.9L446.2 366.8L446.7 374.8L446.9 382.7L447.0 390.6Z" fill="url(#ringg)"/>
<g clip-path="url(#ringc)">
<path d="M436.8 398.5L436.7 406.0L436.6 413.6L436.3 421.1L436.0 428.7L435.4 436.3L434.8 443.9L433.9 451.6L432.8 459.2L431.5 466.9L430.0 474.6L428.2 482.2L426.1 489.8L423.8 497.4L421.1 504.9L418.1 512.3L414.8 519.6L411.1 526.7L407.1 533.7L402.7 540.5L398.0 547.0L392.9 553.3L387.5 559.3L381.8 565.1L375.8 570.5L369.5 575.5L363.0 580.3L356.2 584.6L349.3 588.7L342.1 592.4L334.8 595.7L327.4 598.7L319.9 601.3L312.4 603.7L304.7 605.7L297.1 607.5L289.4 609.0L281.7 610.2L274.0 611.2L266.4 612.0L258.8 612.6L251.2 613.1L243.6 613.3L236.0 613.5L228.5 613.6L221.0 613.6L213.5 613.5L206.0 613.4L198.4 613.2L190.9 612.9L183.3 612.4L175.7 611.7L168.0 610.9L160.4 609.9L152.7 608.7L145.0 607.2L137.4 605.5L129.7 603.5L122.2 601.2L114.6 598.6L107.2 595.6L99.8 592.4L92.6 588.8L85.6 584.8L78.8 580.6L72.1 575.9L65.8 570.9L59.7 565.6L53.9 559.9L48.4 553.9L43.3 547.6L38.5 541.1L34.1 534.3L30.1 527.3L26.4 520.1L23.1 512.7L20.2 505.3L17.6 497.7L15.4 490.0L13.5 482.3L11.9 474.6L10.5 466.9L9.4 459.2L8.6 451.5L7.9 443.8L7.4 436.2L7.0 428.6L6.8 421.0L6.7 413.5L6.6 406.0L6.6 398.5L6.5 391.0L6.5 383.5L6.6 376.0L6.8 368.4L7.0 360.8L7.5 353.1L8.1 345.4L8.9 337.7L9.9 329.9L11.2 322.1L12.8 314.4L14.7 306.6L16.9 298.9L19.4 291.3L22.4 283.8L25.7 276.4L29.3 269.2L33.4 262.2L37.8 255.4L42.6 248.8L47.8 242.6L53.3 236.6L59.1 230.9L65.3 225.5L71.7 220.5L78.3 215.9L85.2 211.6L92.2 207.6L99.4 204.0L106.8 200.7L114.2 197.7L121.8 195.0L129.4 192.7L137.0 190.6L144.7 188.7L152.3 187.2L160.0 185.9L167.7 184.8L175.4 183.9L183.0 183.2L190.7 182.7L198.3 182.3L205.9 182.2L213.4 182.1L221.0 182.2L228.6 182.3L236.1 182.5L243.7 182.9L251.2 183.4L258.8 184.2L266.4 185.1L273.9 186.3L281.5 187.6L289.0 189.2L296.5 191.1L303.9 193.2L311.3 195.6L318.6 198.3L325.9 201.3L333.0 204.5L340.0 208.0L346.9 211.8L353.7 215.9L360.2 220.3L366.6 225.0L372.8 229.9L378.7 235.2L384.4 240.7L389.9 246.4L395.0 252.5L399.9 258.7L404.5 265.2L408.8 271.9L412.7 278.7L416.3 285.7L419.6 292.9L422.6 300.2L425.2 307.6L427.5 315.1L429.6 322.6L431.3 330.2L432.8 337.8L434.0 345.4L434.9 353.0L435.6 360.7L436.2 368.3L436.5 375.8L436.7 383.4L436.8 391.0Z" fill="none" stroke="url(#ringsh)" stroke-width="9" filter="url(#bl2)"/>
</g>
<path d="M436.8 398.5L436.7 406.0L436.6 413.6L436.3 421.1L436.0 428.7L435.4 436.3L434.8 443.9L433.9 451.6L432.8 459.2L431.5 466.9L430.0 474.6L428.2 482.2L426.1 489.8L423.8 497.4L421.1 504.9L418.1 512.3L414.8 519.6L411.1 526.7L407.1 533.7L402.7 540.5L398.0 547.0L392.9 553.3L387.5 559.3L381.8 565.1L375.8 570.5L369.5 575.5L363.0 580.3L356.2 584.6L349.3 588.7L342.1 592.4L334.8 595.7L327.4 598.7L319.9 601.3L312.4 603.7L304.7 605.7L297.1 607.5L289.4 609.0L281.7 610.2L274.0 611.2L266.4 612.0L258.8 612.6L251.2 613.1L243.6 613.3L236.0 613.5L228.5 613.6L221.0 613.6L213.5 613.5L206.0 613.4L198.4 613.2L190.9 612.9L183.3 612.4L175.7 611.7L168.0 610.9L160.4 609.9L152.7 608.7L145.0 607.2L137.4 605.5L129.7 603.5L122.2 601.2L114.6 598.6L107.2 595.6L99.8 592.4L92.6 588.8L85.6 584.8L78.8 580.6L72.1 575.9L65.8 570.9L59.7 565.6L53.9 559.9L48.4 553.9L43.3 547.6L38.5 541.1L34.1 534.3L30.1 527.3L26.4 520.1L23.1 512.7L20.2 505.3L17.6 497.7L15.4 490.0L13.5 482.3L11.9 474.6L10.5 466.9L9.4 459.2L8.6 451.5L7.9 443.8L7.4 436.2L7.0 428.6L6.8 421.0L6.7 413.5L6.6 406.0L6.6 398.5L6.5 391.0L6.5 383.5L6.6 376.0L6.8 368.4L7.0 360.8L7.5 353.1L8.1 345.4L8.9 337.7L9.9 329.9L11.2 322.1L12.8 314.4L14.7 306.6L16.9 298.9L19.4 291.3L22.4 283.8L25.7 276.4L29.3 269.2L33.4 262.2L37.8 255.4L42.6 248.8L47.8 242.6L53.3 236.6L59.1 230.9L65.3 225.5L71.7 220.5L78.3 215.9L85.2 211.6L92.2 207.6L99.4 204.0L106.8 200.7L114.2 197.7L121.8 195.0L129.4 192.7L137.0 190.6L144.7 188.7L152.3 187.2L160.0 185.9L167.7 184.8L175.4 183.9L183.0 183.2L190.7 182.7L198.3 182.3L205.9 182.2L213.4 182.1L221.0 182.2L228.6 182.3L236.1 182.5L243.7 182.9L251.2 183.4L258.8 184.2L266.4 185.1L273.9 186.3L281.5 187.6L289.0 189.2L296.5 191.1L303.9 193.2L311.3 195.6L318.6 198.3L325.9 201.3L333.0 204.5L340.0 208.0L346.9 211.8L353.7 215.9L360.2 220.3L366.6 225.0L372.8 229.9L378.7 235.2L384.4 240.7L389.9 246.4L395.0 252.5L399.9 258.7L404.5 265.2L408.8 271.9L412.7 278.7L416.3 285.7L419.6 292.9L422.6 300.2L425.2 307.6L427.5 315.1L429.6 322.6L431.3 330.2L432.8 337.8L434.0 345.4L434.9 353.0L435.6 360.7L436.2 368.3L436.5 375.8L436.7 383.4L436.8 391.0Z" fill="url(#blueg)"/>
<g clip-path="url(#bluec)">
<path d="M436.8 398.5L436.7 406.0L436.6 413.6L436.3 421.1L436.0 428.7L435.4 436.3L434.8 443.9L433.9 451.6L432.8 459.2L431.5 466.9L430.0 474.6L428.2 482.2L426.1 489.8L423.8 497.4L421.1 504.9L418.1 512.3L414.8 519.6L411.1 526.7L407.1 533.7L402.7 540.5L398.0 547.0L392.9 553.3L387.5 559.3L381.8 565.1L375.8 570.5L369.5 575.5L363.0 580.3L356.2 584.6L349.3 588.7L342.1 592.4L334.8 595.7L327.4 598.7L319.9 601.3L312.4 603.7L304.7 605.7L297.1 607.5L289.4 609.0L281.7 610.2L274.0 611.2L266.4 612.0L258.8 612.6L251.2 613.1L243.6 613.3L236.0 613.5L228.5 613.6L221.0 613.6L213.5 613.5L206.0 613.4L198.4 613.2L190.9 612.9L183.3 612.4L175.7 611.7L168.0 610.9L160.4 609.9L152.7 608.7L145.0 607.2L137.4 605.5L129.7 603.5L122.2 601.2L114.6 598.6L107.2 595.6L99.8 592.4L92.6 588.8L85.6 584.8L78.8 580.6L72.1 575.9L65.8 570.9L59.7 565.6L53.9 559.9L48.4 553.9L43.3 547.6L38.5 541.1L34.1 534.3L30.1 527.3L26.4 520.1L23.1 512.7L20.2 505.3L17.6 497.7L15.4 490.0L13.5 482.3L11.9 474.6L10.5 466.9L9.4 459.2L8.6 451.5L7.9 443.8L7.4 436.2L7.0 428.6L6.8 421.0L6.7 413.5L6.6 406.0L6.6 398.5L6.5 391.0L6.5 383.5L6.6 376.0L6.8 368.4L7.0 360.8L7.5 353.1L8.1 345.4L8.9 337.7L9.9 329.9L11.2 322.1L12.8 314.4L14.7 306.6L16.9 298.9L19.4 291.3L22.4 283.8L25.7 276.4L29.3 269.2L33.4 262.2L37.8 255.4L42.6 248.8L47.8 242.6L53.3 236.6L59.1 230.9L65.3 225.5L71.7 220.5L78.3 215.9L85.2 211.6L92.2 207.6L99.4 204.0L106.8 200.7L114.2 197.7L121.8 195.0L129.4 192.7L137.0 190.6L144.7 188.7L152.3 187.2L160.0 185.9L167.7 184.8L175.4 183.9L183.0 183.2L190.7 182.7L198.3 182.3L205.9 182.2L213.4 182.1L221.0 182.2L228.6 182.3L236.1 182.5L243.7 182.9L251.2 183.4L258.8 184.2L266.4 185.1L273.9 186.3L281.5 187.6L289.0 189.2L296.5 191.1L303.9 193.2L311.3 195.6L318.6 198.3L325.9 201.3L333.0 204.5L340.0 208.0L346.9 211.8L353.7 215.9L360.2 220.3L366.6 225.0L372.8 229.9L378.7 235.2L384.4 240.7L389.9 246.4L395.0 252.5L399.9 258.7L404.5 265.2L408.8 271.9L412.7 278.7L416.3 285.7L419.6 292.9L422.6 300.2L425.2 307.6L427.5 315.1L429.6 322.6L431.3 330.2L432.8 337.8L434.0 345.4L434.9 353.0L435.6 360.7L436.2 368.3L436.5 375.8L436.7 383.4L436.8 391.0Z" fill="none" stroke="#031e50" stroke-opacity="0.45" stroke-width="16" filter="url(#bl6)"/>
<rect x="0" y="150" width="470" height="300" fill="#02143c" fill-opacity="0.8" mask="url(#topm)"/>
<rect x="0" y="150" width="470" height="500" fill="#fff" fill-opacity="0.125" mask="url(#cres)"/>
<path d="M436.8 398.5L436.7 406.0L436.6 413.6L436.3 421.1L436.0 428.7L435.4 436.3L434.8 443.9L433.9 451.6L432.8 459.2L431.5 466.9L430.0 474.6L428.2 482.2L426.1 489.8L423.8 497.4L421.1 504.9L418.1 512.3L414.8 519.6L411.1 526.7L407.1 533.7L402.7 540.5L398.0 547.0L392.9 553.3L387.5 559.3L381.8 565.1L375.8 570.5L369.5 575.5L363.0 580.3L356.2 584.6L349.3 588.7L342.1 592.4L334.8 595.7L327.4 598.7L319.9 601.3L312.4 603.7L304.7 605.7L297.1 607.5L289.4 609.0L281.7 610.2L274.0 611.2L266.4 612.0L258.8 612.6L251.2 613.1L243.6 613.3L236.0 613.5L228.5 613.6L221.0 613.6L213.5 613.5L206.0 613.4L198.4 613.2L190.9 612.9L183.3 612.4L175.7 611.7L168.0 610.9L160.4 609.9L152.7 608.7L145.0 607.2L137.4 605.5L129.7 603.5L122.2 601.2L114.6 598.6L107.2 595.6L99.8 592.4L92.6 588.8L85.6 584.8L78.8 580.6L72.1 575.9L65.8 570.9L59.7 565.6L53.9 559.9L48.4 553.9L43.3 547.6L38.5 541.1L34.1 534.3L30.1 527.3L26.4 520.1L23.1 512.7L20.2 505.3L17.6 497.7L15.4 490.0L13.5 482.3L11.9 474.6L10.5 466.9L9.4 459.2L8.6 451.5L7.9 443.8L7.4 436.2L7.0 428.6L6.8 421.0L6.7 413.5L6.6 406.0L6.6 398.5L6.5 391.0L6.5 383.5L6.6 376.0L6.8 368.4L7.0 360.8L7.5 353.1L8.1 345.4L8.9 337.7L9.9 329.9L11.2 322.1L12.8 314.4L14.7 306.6L16.9 298.9L19.4 291.3L22.4 283.8L25.7 276.4L29.3 269.2L33.4 262.2L37.8 255.4L42.6 248.8L47.8 242.6L53.3 236.6L59.1 230.9L65.3 225.5L71.7 220.5L78.3 215.9L85.2 211.6L92.2 207.6L99.4 204.0L106.8 200.7L114.2 197.7L121.8 195.0L129.4 192.7L137.0 190.6L144.7 188.7L152.3 187.2L160.0 185.9L167.7 184.8L175.4 183.9L183.0 183.2L190.7 182.7L198.3 182.3L205.9 182.2L213.4 182.1L221.0 182.2L228.6 182.3L236.1 182.5L243.7 182.9L251.2 183.4L258.8 184.2L266.4 185.1L273.9 186.3L281.5 187.6L289.0 189.2L296.5 191.1L303.9 193.2L311.3 195.6L318.6 198.3L325.9 201.3L333.0 204.5L340.0 208.0L346.9 211.8L353.7 215.9L360.2 220.3L366.6 225.0L372.8 229.9L378.7 235.2L384.4 240.7L389.9 246.4L395.0 252.5L399.9 258.7L404.5 265.2L408.8 271.9L412.7 278.7L416.3 285.7L419.6 292.9L422.6 300.2L425.2 307.6L427.5 315.1L429.6 322.6L431.3 330.2L432.8 337.8L434.0 345.4L434.9 353.0L435.6 360.7L436.2 368.3L436.5 375.8L436.7 383.4L436.8 391.0Z" fill="none" stroke="#1a1a1a" stroke-opacity="0.7" stroke-width="3" filter="url(#bl1)"/>
</g>
</svg>
<div class="b" style="left:0;top:799px;width:800px;height:1px;background:#e2e2e0"></div>
<div class="b" style="left:0;top:0;width:1.5px;height:800px;background:rgba(255,255,255,.13)"></div>
<div class="b" style="left:220px;top:0;width:2px;height:800px;background:rgba(95,248,252,.55)"></div>
<div class="b" style="left:0;top:399px;width:800px;height:2px;background:rgba(95,248,252,.55)"></div>
<div class="b" style="left:446.6px;top:82.4px;width:400px;height:447.4px;background:linear-gradient(#0a46dc 0,#0a46dc 99.2%,#0730c4 99.5%,#0522b0 100%);border-radius:7px 7px 0 0"></div>
<div class="b" style="left:446.6px;top:82.4px;width:400px;height:26px;border-radius:7px 7px 0 0;background:linear-gradient(#0a50d2 0,#2a86ff 7%,#1470f6 14%,#0658ea 30%,#0452e4 55%,#0560f2 82%,#0566f6 92%,#0238c4 97%,#0238c4 100%)"></div>
<div class="b" style="left:450px;top:108.2px;width:400px;height:418.2px;background:#eeeeee"></div>
<div class="t " style="left:453.50px;top:91.07px;width:49.00px;color:#0a2a7a;font-weight:bold;font-size:12.25px;">图层样式</div>
<div class="t " style="left:452.60px;top:90.27px;width:49.00px;color:#ffffff;font-weight:bold;font-size:12.25px;">图层样式</div>
<div class="b" style="left:459.5px;top:121.5px;width:89.5px;height:395px;border:1px solid #1e1e1e;background:#ededed"></div>
<div class="b" style="left:459.5px;top:141px;width:89.5px;height:4px;border-top:1px solid #1e1e1e;border-bottom:1px solid #1e1e1e;background:#eeeeee;border-left:1px solid #1e1e1e;border-right:1px solid #1e1e1e"></div>
<div class="b" style="left:459.5px;top:163.2px;width:89.5px;height:1px;background:#1e1e1e"></div>
<div class="t " style="left:464.00px;top:125.57px;width:21.34px;">样式</div>
<div class="t " style="left:464.00px;top:147.77px;width:66.84px;">混合选项<span class="l">:</span>默认</div>
<div class="sep" style="top:183.45px"></div>
<div class="cb s" style="left:464.80px;top:168.80px"><svg class="abs" style="left:0.2px;top:0.1px" width="8" height="8" viewBox="0 0 8 8"><path d="M1.2 3.6 L3.2 5.8 L6.9 1.6" fill="none" stroke="#21a121" stroke-width="1.7"/></svg></div>
<div class="t " style="left:477.20px;top:166.17px;width:21.34px;">投影</div>
<div class="b" style="left:460.5px;top:184.35px;width:87.5px;height:18.65px;background:#316ac5"></div>
<div class="sep" style="top:203.10px"></div>
<div class="cb s" style="left:464.80px;top:188.45px"><svg class="abs" style="left:0.2px;top:0.1px" width="8" height="8" viewBox="0 0 8 8"><path d="M1.2 3.6 L3.2 5.8 L6.9 1.6" fill="none" stroke="#21a121" stroke-width="1.7"/></svg></div>
<div class="t " style="left:477.20px;top:185.82px;width:32.01px;color:#fff;">内阴影</div>
<div class="sep" style="top:222.75px"></div>
<div class="cb s" style="left:464.80px;top:208.10px"></div>
<div class="t " style="left:477.20px;top:205.47px;width:32.01px;">外发光</div>
<div class="sep" style="top:242.40px"></div>
<div class="cb s" style="left:464.80px;top:227.75px"><svg class="abs" style="left:0.2px;top:0.1px" width="8" height="8" viewBox="0 0 8 8"><path d="M1.2 3.6 L3.2 5.8 L6.9 1.6" fill="none" stroke="#21a121" stroke-width="1.7"/></svg></div>
<div class="t " style="left:477.20px;top:225.12px;width:32.01px;">内发光</div>
<div class="sep" style="top:262.05px"></div>
<div class="cb s" style="left:464.80px;top:247.40px"></div>
<div class="t " style="left:477.20px;top:244.77px;width:53.35px;">斜面和浮雕</div>
<div class="sep" style="top:281.70px"></div>
<div class="cb s" style="left:477.20px;top:267.05px"></div>
<div class="t " style="left:490.00px;top:264.42px;width:32.01px;">等高线</div>
<div class="sep" style="top:301.35px"></div>
<div class="cb s" style="left:477.20px;top:286.70px"></div>
<div class="t " style="left:490.00px;top:284.07px;width:21.34px;">纹理</div>
<div class="sep" style="top:321.00px"></div>
<div class="cb s" style="left:464.80px;top:306.35px"></div>
<div class="t " style="left:477.20px;top:303.72px;width:21.34px;">光泽</div>
<div class="sep" style="top:340.65px"></div>
<div class="cb s" style="left:464.80px;top:326.00px"></div>
<div class="t " style="left:477.20px;top:323.37px;width:42.68px;">颜色叠加</div>
<div class="sep" style="top:360.30px"></div>
<div class="cb s" style="left:464.80px;top:345.65px"><svg class="abs" style="left:0.2px;top:0.1px" width="8" height="8" viewBox="0 0 8 8"><path d="M1.2 3.6 L3.2 5.8 L6.9 1.6" fill="none" stroke="#21a121" stroke-width="1.7"/></svg></div>
<div class="t " style="left:477.20px;top:343.02px;width:42.68px;">渐变叠加</div>
<div class="sep" style="top:379.95px"></div>
<div class="cb s" style="left:464.80px;top:365.30px"></div>
<div class="t " style="left:477.20px;top:362.67px;width:42.68px;">图案叠加</div>
<div class="sep" style="top:399.60px"></div>
<div class="cb s" style="left:464.80px;top:384.95px"></div>
<div class="t " style="left:477.20px;top:382.32px;width:21.34px;">描边</div>
<div class="grp" style="left:563px;top:123px;width:300px;height:394px"></div>
<div class="b" style="left:578.5px;top:121px;width:37px;height:5px;background:#eeeeee"></div>
<div class="t " style="left:581.00px;top:117.37px;width:32.01px;">内阴影</div>
<div class="grp" style="left:572.4px;top:140px;width:300px;height:158px"></div>
<div class="b" style="left:587px;top:138px;width:26.5px;height:5px;background:#eeeeee"></div>
<div class="t " style="left:589.60px;top:134.17px;width:21.34px;">结构</div>
<div class="grp" style="left:572.4px;top:308.6px;width:300px;height:71.8px"></div>
<div class="b" style="left:587px;top:306.6px;width:26.5px;height:5px;background:#eeeeee"></div>
<div class="t " style="left:589.80px;top:302.97px;width:21.34px;">品质</div>
<div class="t " style="left:586.47px;top:158.57px;width:59.03px;">混合模式<span class="l">(B):</span></div>
<div class="inp" style="left:650px;top:155px;width:109.4px;height:19px"></div>
<div class="b" style="left:745px;top:156.2px;width:13.2px;height:16.6px;border-radius:2px;background:linear-gradient(#cfdcf8,#b6c9f2);border:1px solid #b4c6ee"></div>
<svg class="abs" style="left:747.4px;top:161px" width="9" height="7" viewBox="0 0 9 7"><path d="M1 1.2 L4.5 4.8 L8 1.2" fill="none" stroke="#2a3f6e" stroke-width="1.9"/></svg>
<div class="t " style="left:655.60px;top:158.37px;width:21.34px;">滤色</div>
<div class="b" style="left:762.5px;top:155.6px;width:28px;height:15.2px;background:#fff;border:1px solid #a0a0a0"></div>
<div class="t " style="left:585.35px;top:178.57px;width:60.15px;">不透明度<span class="l">(O):</span></div>
<div class="trk" style="left:653.2px;top:183.80px;width:86.6px"></div><svg class="abs" style="left:660.90px;top:179.40px" width="11" height="12" viewBox="0 0 11 12"><path d="M5.5 0.8 L9.6 3.9 L9.6 10.0 Q9.6 10.6 9 10.6 L2 10.6 Q1.4 10.6 1.4 10.0 L1.4 3.9 Z" fill="#f7fbf5" stroke="#8b9c8b" stroke-width="0.9"/><path d="M1.9 8.7 H9.1 V9.9 Q9.1 10.2 8.8 10.2 H2.2 Q1.9 10.2 1.9 9.9 Z" fill="#35b535"/></svg>
<div class="inp" style="left:749.30px;top:176.70px;width:33.60px;height:16.00px"></div><div class="b" style="left:751.80px;top:178.90px;width:11.3px;height:11px;background:#316ac5"></div><div class="t " style="left:751.90px;top:178.97px;width:10.65px;color:#fff;font-size:9.6px;">14</div>
<div class="t " style="left:785.00px;top:178.57px;width:9.16px;"><span class="l">%</span></div>
<div class="t " style="left:607.81px;top:206.57px;width:37.69px;">角度<span class="l">(A):</span></div>
<svg class="abs" style="left:648px;top:194px" width="36" height="37" viewBox="648 194 36 37"><circle cx="666" cy="212.4" r="15.2" fill="#f5f5f5" stroke="#5d6b8e" stroke-width="1.8"/><path d="M666.2 212.8 V228" stroke="#000" stroke-width="1"/><circle cx="666.2" cy="212.8" r="1.4" fill="#000"/></svg>
<div class="inp" style="left:685.70px;top:204.20px;width:37.20px;height:16.20px"></div><div class="t " style="left:688.30px;top:206.57px;width:13.84px;font-size:9.6px;">-90</div>
<div class="t " style="left:724.60px;top:206.87px;width:10.67px;">度</div>
<div class="cb" style="left:743.8px;top:206.2px"></div>
<div class="t " style="left:757.60px;top:206.37px;width:68.00px;">使用全局光<span class="l">(G)</span></div>
<div class="t " style="left:607.25px;top:234.57px;width:38.25px;">距离<span class="l">(D):</span></div>
<div class="trk" style="left:653.2px;top:239.10px;width:86.6px"></div><svg class="abs" style="left:663.50px;top:234.70px" width="11" height="12" viewBox="0 0 11 12"><path d="M5.5 0.8 L9.6 3.9 L9.6 10.0 Q9.6 10.6 9 10.6 L2 10.6 Q1.4 10.6 1.4 10.0 L1.4 3.9 Z" fill="#f7fbf5" stroke="#8b9c8b" stroke-width="0.9"/><path d="M1.9 8.7 H9.1 V9.9 Q9.1 10.2 8.8 10.2 H2.2 Q1.9 10.2 1.9 9.9 Z" fill="#35b535"/></svg>
<div class="inp" style="left:749.30px;top:232.70px;width:33.60px;height:16.20px"></div><div class="t " style="left:751.90px;top:235.07px;width:10.65px;font-size:9.6px;">17</div>
<div class="t " style="left:784.60px;top:234.57px;width:21.34px;">像素</div>
<div class="t " style="left:607.25px;top:255.07px;width:38.25px;">阻塞<span class="l">(C):</span></div>
<div class="trk" style="left:653.2px;top:259.60px;width:86.6px"></div><svg class="abs" style="left:709.40px;top:255.20px" width="11" height="12" viewBox="0 0 11 12"><path d="M5.5 0.8 L9.6 3.9 L9.6 10.0 Q9.6 10.6 9 10.6 L2 10.6 Q1.4 10.6 1.4 10.0 L1.4 3.9 Z" fill="#f7fbf5" stroke="#8b9c8b" stroke-width="0.9"/><path d="M1.9 8.7 H9.1 V9.9 Q9.1 10.2 8.8 10.2 H2.2 Q1.9 10.2 1.9 9.9 Z" fill="#35b535"/></svg>
<div class="inp" style="left:749.30px;top:253.60px;width:33.60px;height:16.20px"></div><div class="t " style="left:751.90px;top:255.97px;width:10.65px;font-size:9.6px;">69</div>
<div class="t " style="left:785.00px;top:255.57px;width:9.16px;"><span class="l">%</span></div>
<div class="t " style="left:607.81px;top:275.57px;width:37.69px;">大小<span class="l">(S):</span></div>
<div class="trk" style="left:653.2px;top:280.10px;width:86.6px"></div><svg class="abs" style="left:656.50px;top:275.70px" width="11" height="12" viewBox="0 0 11 12"><path d="M5.5 0.8 L9.6 3.9 L9.6 10.0 Q9.6 10.6 9 10.6 L2 10.6 Q1.4 10.6 1.4 10.0 L1.4 3.9 Z" fill="#f7fbf5" stroke="#8b9c8b" stroke-width="0.9"/><path d="M1.9 8.7 H9.1 V9.9 Q9.1 10.2 8.8 10.2 H2.2 Q1.9 10.2 1.9 9.9 Z" fill="#35b535"/></svg>
<div class="inp" style="left:749.30px;top:274.00px;width:33.60px;height:16.20px"></div><div class="t " style="left:751.90px;top:276.37px;width:5.33px;font-size:9.6px;">9</div>
<div class="t " style="left:784.60px;top:275.97px;width:21.34px;">像素</div>
<div class="t " style="left:609.57px;top:331.17px;width:34.83px;">等高线<span class="l">:</span></div>
<svg class="abs" style="left:650px;top:323.6px" width="38" height="28" viewBox="650 323.6 38 28">
<rect x="650.8" y="324.4" width="35.8" height="26.4" fill="#fff" stroke="#1a1a1a" stroke-width="1.6"/>
<path d="M653.6 349.6 L677 326.2 L677 349.6 Z" fill="#8e8e8e"/>
<rect x="677.6" y="325" width="8.6" height="25.2" fill="#ebebeb"/>
<path d="M677.5 325 V350.4" stroke="#555" stroke-width="0.8"/>
<path d="M679.2 335.6 H684.4 L681.8 338.8 Z" fill="#000"/></svg>
<div class="cb" style="left:699.2px;top:331.8px"></div>
<div class="t " style="left:713.20px;top:331.07px;width:55.08px;">消除锯齿<span class="l">(L)</span></div>
<div class="t " style="left:607.25px;top:358.57px;width:38.25px;">杂色<span class="l">(N):</span></div>
<div class="trk" style="left:653.2px;top:363.00px;width:86.6px"></div><svg class="abs" style="left:648.50px;top:358.60px" width="11" height="12" viewBox="0 0 11 12"><path d="M5.5 0.8 L9.6 3.9 L9.6 10.0 Q9.6 10.6 9 10.6 L2 10.6 Q1.4 10.6 1.4 10.0 L1.4 3.9 Z" fill="#f7fbf5" stroke="#8b9c8b" stroke-width="0.9"/><path d="M1.9 8.7 H9.1 V9.9 Q9.1 10.2 8.8 10.2 H2.2 Q1.9 10.2 1.9 9.9 Z" fill="#35b535"/></svg>
<div class="inp" style="left:749.30px;top:356.20px;width:33.80px;height:16.40px"></div><div class="t " style="left:751.90px;top:358.67px;width:5.33px;font-size:9.6px;">0</div>
<div class="t " style="left:785.00px;top:358.57px;width:9.16px;"><span class="l">%</span></div>
<div class="btn" style="left:618px;top:386.5px;width:80.6px;height:16.6px"></div>
<div class="t " style="left:626.00px;top:388.57px;width:64.02px;">设置为默认值</div>
<div class="btn" style="left:708.2px;top:386.3px;width:80.2px;height:16.6px"></div>
<div class="t " style="left:716.00px;top:388.57px;width:64.02px;">复位为默认值</div>
</body></html>
